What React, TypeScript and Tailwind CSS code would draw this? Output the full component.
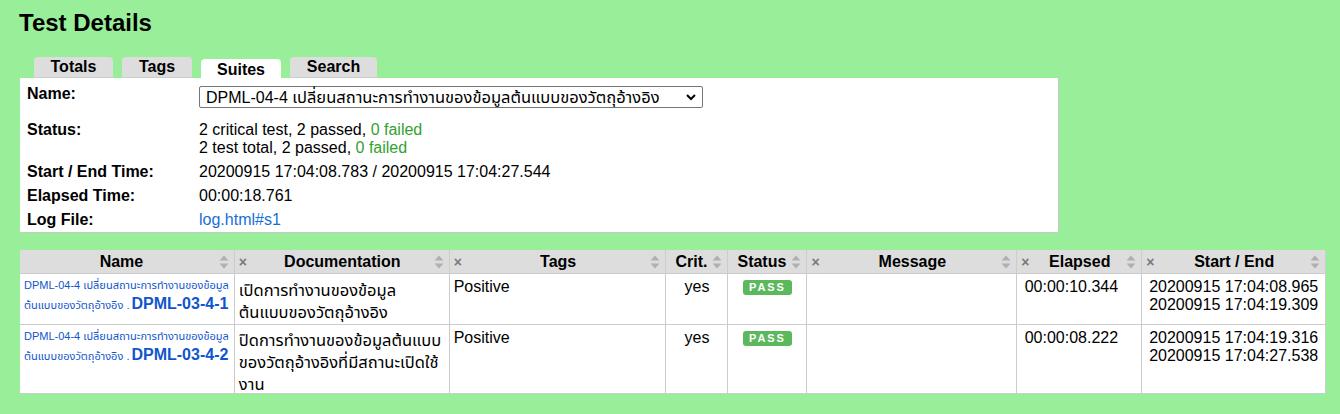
import React from 'react';

const font = { fontFamily: '"Liberation Sans", Arial, "Noto Sans Thai", "DejaVu Sans", sans-serif' };

const SortIcon: React.FC = () => (
  <svg width="10" height="14" viewBox="0 0 10 14" className="shrink-0">
    <path d="M5 0.5 L9.5 5.5 L0.5 5.5 Z" fill="#b0b0b0" />
    <path d="M5 13.5 L9.5 8.5 L0.5 8.5 Z" fill="#b0b0b0" />
  </svg>
);

const Cross: React.FC = () => (
  <span className="text-[#7a7a7a] text-[14px] font-bold leading-none mr-1">×</span>
);

type Col = { label: string; width: string; hide?: boolean };

const cols: Col[] = [
  { label: 'Name', width: 'w-[214px]' },
  { label: 'Documentation', width: 'w-[215px]', hide: true },
  { label: 'Tags', width: 'w-[217px]', hide: true },
  { label: 'Crit.', width: 'w-[62px]' },
  { label: 'Status', width: 'w-[79px]' },
  { label: 'Message', width: 'w-[210px]', hide: true },
  { label: 'Elapsed', width: 'w-[125px]', hide: true },
  { label: 'Start / End', width: 'w-[184px]', hide: true },
];

const tests = [
  {
    id: 'DPML-03-4-1',
    doc: ['เปิดการทำงานของข้อมูล', 'ต้นแบบของวัตถุอ้างอิง'],
    elapsed: '00:00:10.344',
    start: '20200915 17:04:08.965',
    end: '20200915 17:04:19.309',
    h: 'h-[50px]',
    docPad: 'pt-[5px]',
  },
  {
    id: 'DPML-03-4-2',
    doc: ['ปิดการทำงานของข้อมูลต้นแบบ', 'ของวัตถุอ้างอิงที่มีสถานะเปิดใช้', 'งาน'],
    elapsed: '00:00:08.222',
    start: '20200915 17:04:19.316',
    end: '20200915 17:04:27.538',
    h: 'h-[69px]',
    docPad: 'pt-[4px]',
  },
];

const tabs = [
  { label: 'Totals', w: 'w-[79px]' },
  { label: 'Tags', w: 'w-[70px]' },
  { label: 'Suites', w: 'w-[80px]', active: true },
  { label: 'Search', w: 'w-[87px]' },
];

const App: React.FC = () => {
  return (
    <div className="min-h-[414px] w-[1340px] bg-[#99ee99] text-black pl-[20px] pt-[8px]" style={font}>
      <h1 className="text-[24px] font-bold leading-[30px] -ml-[1px]">Test Details</h1>

      {/* onglets */}
      <div className="flex items-end gap-[9px] ml-[14px] mt-[19px] h-[21px]">
        {tabs.map((t) =>
          t.active ? (
            <div
              key={t.label}
              className={`${t.w} h-[19px] bg-white rounded-t-[4px] text-center font-bold text-[16px] leading-[21px]`}
            >
              {t.label}
            </div>
          ) : (
            <div
              key={t.label}
              className={`${t.w} h-[21px] bg-[#dddddd] rounded-t-[4px] border-b border-[#cccccc] text-center font-bold text-[16px] leading-[20px]`}
            >
              {t.label}
            </div>
          )
        )}
      </div>

      {/* détails de la suite */}
      <div className="w-[1039px] bg-white border-r border-b border-[#c8c8c8] pt-[4px] text-[16px] leading-[18px]">
        <div className="flex py-[3px] h-[36px]">
          <div className="w-[179px] pl-[7px] font-bold">Name:</div>
          <div className="relative w-[504px] h-[22px] mt-[1px] border border-[#767676] rounded-[2px] flex items-center pl-[6px]">
            <span className="leading-[20px]">
              DPML-04-4 <span className="text-[16.5px]">เปลี่ยนสถานะการทำงานของข้อมูลต้นแบบของวัตถุอ้างอิง</span>
            </span>
            <svg width="10" height="7" viewBox="0 0 10 7" className="absolute right-[6px] top-[7px]">
              <path d="M1 1 L5 5 L9 1" fill="none" stroke="#000" strokeWidth="2" />
            </svg>
          </div>
        </div>
        <div className="flex py-[3px]">
          <div className="w-[179px] pl-[7px] font-bold">Status:</div>
          <div>
            <div>
              2 critical test, 2 passed, <span className="text-[#33a033]">0 failed</span>
            </div>
            <div>
              2 test total, 2 passed, <span className="text-[#33a033]">0 failed</span>
            </div>
          </div>
        </div>
        <div className="flex py-[3px]">
          <div className="w-[179px] pl-[7px] font-bold">Start / End Time:</div>
          <div>20200915 17:04:08.783 / 20200915 17:04:27.544</div>
        </div>
        <div className="flex py-[3px]">
          <div className="w-[179px] pl-[7px] font-bold">Elapsed Time:</div>
          <div>00:00:18.761</div>
        </div>
        <div className="flex py-[3px]">
          <div className="w-[179px] pl-[7px] font-bold">Log File:</div>
          <div className="text-[#1a6fd4]">log.html#s1</div>
        </div>
      </div>

      {/* tableau des tests */}
      <div className="mt-[17px] w-[1306px] bg-white border-r border-b border-[#cccccc] text-[16px] leading-[18px]">
        <div className="flex bg-[#dddddd] h-[24px] border-b border-[#cccccc]">
          {cols.map((c, i) => (
            <div
              key={c.label}
              className={`${c.width} flex items-center pl-[4px] pr-[5px] font-bold ${i > 0 ? 'border-l border-[#cccccc]' : ''}`}
            >
              {c.hide ? <Cross /> : null}
              <span className="flex-1 text-center">{c.label}</span>
              <SortIcon />
            </div>
          ))}
        </div>
        {tests.map((t, idx) => (
          <div key={t.id} className={`flex ${t.h} ${idx > 0 ? 'border-t border-[#cccccc]' : ''}`}>
            <div className="w-[214px] pl-[4px] pt-[3px] text-[#1155cc]">
              <div className="text-[11px] leading-[17px] whitespace-nowrap">
                DPML-04-4 เปลี่ยนสถานะการทำงานของข้อมูล
              </div>
              <div className="flex items-baseline whitespace-nowrap h-[19px]">
                <span className="text-[11px]">ต้นแบบของวัตถุอ้างอิง . </span>
                <span className="text-[16px] font-bold leading-[19px] ml-[2px]">{t.id}</span>
              </div>
            </div>
            <div className={`w-[215px] border-l border-[#cccccc] pl-[4px] ${t.docPad}`}>
              {t.doc.map((line) => (
                <div key={line} className="h-[22px] leading-[22px] text-[16.5px] whitespace-nowrap">
                  {line}
                </div>
              ))}
            </div>
            <div className="w-[217px] border-l border-[#cccccc] pl-[4px] pt-[4px]">Positive</div>
            <div className="w-[62px] border-l border-[#cccccc] text-center pt-[4px]">yes</div>
            <div className="w-[79px] border-l border-[#cccccc] flex justify-center pt-[6px]">
              <span className="h-[15px] px-[6px] rounded-[3px] bg-[#5cb85c] text-white text-[11px] font-bold leading-[15px] tracking-[0.18em]">
                PASS
              </span>
            </div>
            <div className="w-[210px] border-l border-[#cccccc]"></div>
            <div className="w-[125px] border-l border-[#cccccc] text-right pr-[23px] pt-[4px]">{t.elapsed}</div>
            <div className="w-[184px] border-l border-[#cccccc] pl-[7px] pt-[4px]">
              <div>{t.start}</div>
              <div>{t.end}</div>
            </div>
          </div>
        ))}
      </div>
    </div>
  );
};

export default App;
